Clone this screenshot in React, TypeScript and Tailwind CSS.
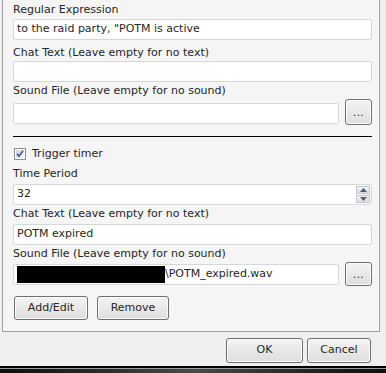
import React from "react";

const font = "font-['DejaVu_Sans',sans-serif]";

function Label({ children, className = "" }: { children: React.ReactNode; className?: string }) {
  return (
    <div className={`h-[16px] leading-[16px] text-[11px] text-[#262626] ${className}`}>{children}</div>
  );
}

function TextBox({ children, className = "" }: { children?: React.ReactNode; className?: string }) {
  return (
    <div
      className={`h-[21px] bg-white border border-[#d4d8dc] rounded-[2px] flex items-center pl-[3px] text-[11px] text-[#262626] relative ${className}`}
    >
      {children}
    </div>
  );
}

function WinButton({ children, className = "" }: { children: React.ReactNode; className?: string }) {
  return (
    <div
      className={`border border-[#707070] rounded-[3px] bg-gradient-to-b from-[#f3f3f3] to-[#dedede] shadow-[inset_0_0_0_1px_#fbfbfb] flex items-center justify-center text-[11px] text-[#262626] ${className}`}
    >
      {children}
    </div>
  );
}

function Dots() {
  return <span className="text-[10px] leading-none tracking-[0.5px] mt-[1px]">...</span>;
}

export default function App() {
  return (
    <div className={`w-[386px] h-[373px] bg-[#efefef] overflow-hidden flex flex-col ${font}`}>
      <div className="ml-[2px] w-[378px] h-[332px] border-l border-r border-b border-[#a0a0a0] bg-[#f5f5f5] pl-[10px] pr-[7px] pt-[2px] flex flex-col">
        <Label>Regular Expression</Label>
        <TextBox className="mt-[1px]">to the raid party, &quot;POTM is active</TextBox>
        <Label className="mt-[5px]">Chat Text (Leave empty for no text)</Label>
        <TextBox />
        <Label className="mt-[1px] h-[15px]">Sound File (Leave empty for no sound)</Label>
        <div className="flex items-start h-[26px] gap-[6px]">
          <TextBox className="mt-[4px] w-[326px]" />
          <WinButton className="w-[27px] h-[26px]">
            <Dots />
          </WinButton>
        </div>
        <div className="mt-[11px] h-[1px] bg-black" />
        <div className="mt-[9px] h-[16px] flex items-center pl-[1px]">
          <svg width="12" height="12" viewBox="0 0 12 12" className="shrink-0">
            <defs>
              <linearGradient id="cbg" x1="0" y1="0" x2="1" y2="1">
                <stop offset="0" stopColor="#cfd3da" />
                <stop offset="1" stopColor="#f4f5f7" />
              </linearGradient>
            </defs>
            <rect x="0.5" y="0.5" width="11" height="11" fill="#fff" stroke="#8e8f8f" />
            <rect x="2" y="2" width="8" height="8" fill="url(#cbg)" />
            <path d="M3 5.8 L5 8.3 L9 2.8" fill="none" stroke="#4a5a8c" strokeWidth="1.6" />
          </svg>
          <span className="ml-[6px] text-[11px] text-[#262626] leading-[16px]">Trigger timer</span>
        </div>
        <Label className="mt-[4px]">Time Period</Label>
        <TextBox className="mt-[2px]">
          32
          <div className="absolute right-[1px] top-[1px] bottom-[1px] w-[14px] flex flex-col gap-[1px]">
            <div className="flex-1 bg-gradient-to-b from-[#f4f4f4] to-[#dcdcdc] border border-[#c4c8cc] flex items-center justify-center">
              <svg width="7" height="4" viewBox="0 0 7 4">
                <path d="M0 4 L3.5 0 L7 4 Z" fill="#4d5b7a" />
              </svg>
            </div>
            <div className="flex-1 bg-gradient-to-b from-[#f4f4f4] to-[#dcdcdc] border border-[#c4c8cc] flex items-center justify-center">
              <svg width="7" height="4" viewBox="0 0 7 4">
                <path d="M0 0 L3.5 4 L7 0 Z" fill="#4d5b7a" />
              </svg>
            </div>
          </div>
        </TextBox>
        <Label className="mt-[1px]">Chat Text (Leave empty for no text)</Label>
        <TextBox className="mt-[2px]">POTM expired</TextBox>
        <Label className="mt-[1px] h-[15px]">Sound File (Leave empty for no sound)</Label>
        <div className="flex items-start h-[25px] gap-[6px]">
          <TextBox className="mt-[2px] w-[326px] pl-[2px]">
            <div className="w-[148px] h-[17px] bg-black shrink-0" />
            <span>\POTM_expired.wav</span>
          </TextBox>
          <WinButton className="w-[27px] h-[24px]">
            <Dots />
          </WinButton>
        </div>
        <div className="mt-[9px] flex gap-[9px] pl-[1px]">
          <WinButton className="w-[74px] h-[24px]">Add/Edit</WinButton>
          <WinButton className="w-[72px] h-[24px]">Remove</WinButton>
        </div>
      </div>
      <div className="mt-[6px] flex justify-end gap-[4px] pr-[15px]">
        <WinButton className="w-[77px] h-[25px]">OK</WinButton>
        <WinButton className="w-[64px] h-[25px]">Cancel</WinButton>
      </div>
      <div className="mt-[3px] h-[2px] bg-black" />
      <div className="h-[1px] bg-[#9a9a9a]" />
      <div className="flex-1 bg-gradient-to-r from-[#0d0d0d] via-[#4a4a4a] to-[#0d0d0d]" />
    </div>
  );
}
